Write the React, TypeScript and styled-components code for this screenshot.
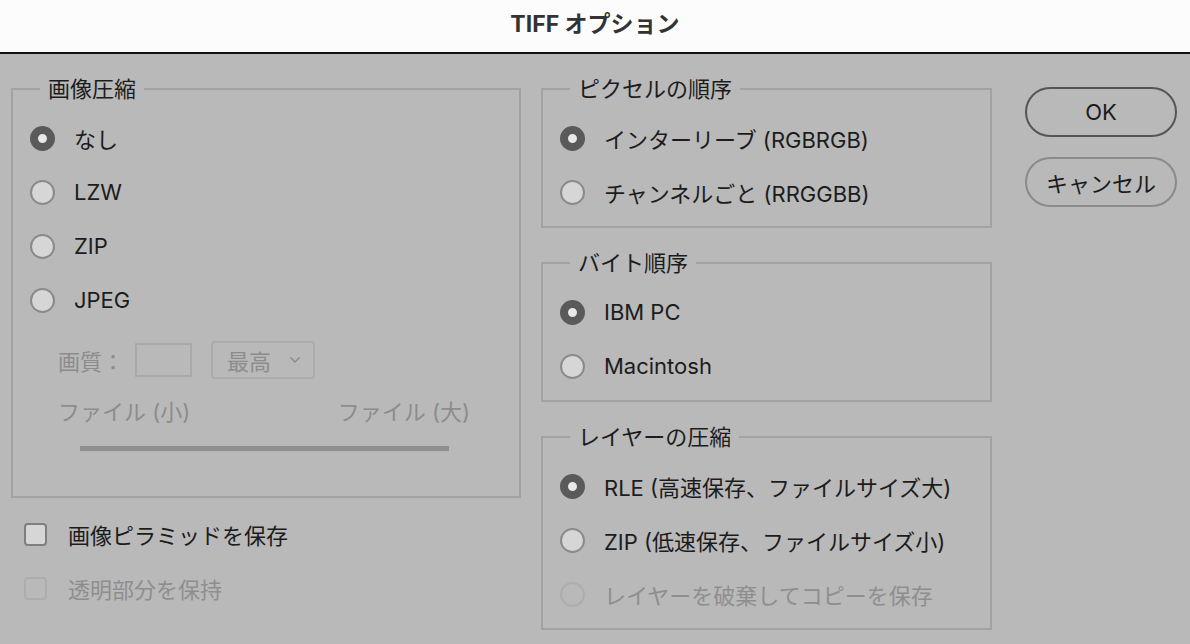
import styled, { createGlobalStyle } from "styled-components";

const GlobalStyle = createGlobalStyle`
  html, body {
    margin: 0;
    padding: 0;
    background: #b9b9b9;
  }
  body {
    font-family: Inter, "Noto Sans CJK JP", sans-serif;
    color: #1c1c1c;
  }
`;

const Dialog = styled.div`
  width: 1190px;
  height: 644px;
  display: flex;
  flex-direction: column;
  overflow: hidden;
`;

const TitleBar = styled.div`
  height: 54px;
  flex: none;
  background: #fcfcfc;
  border-bottom: 2px solid #111;
  display: flex;
  justify-content: center;
  align-items: center;
  padding-bottom: 9px;
  box-sizing: border-box;
  font-size: 23px;
  font-weight: bold;
  color: #333;
`;

const Body = styled.div`
  flex: 1;
  display: flex;
  gap: 20px;
  padding: 20px 14px 0 11px;
`;

const Column = styled.div<{ $width: number }>`
  width: ${(p) => p.$width}px;
  flex: none;
  display: flex;
  flex-direction: column;
  gap: 20px;
`;

const LeftColumn = styled(Column)`
  gap: 9px;
`;

const Group = styled.fieldset<{ $bottom?: number }>`
  margin: 0;
  min-width: 0;
  border: 2px solid #a2a2a2;
  padding: 7px 0 ${(p) => (p.$bottom ?? 6) + 1}px 17px;
`;

const Legend = styled.legend`
  margin-left: 10px;
  padding: 0 8px;
  font-size: 22px;
  line-height: 30px;
`;

const OptionRow = styled.label<{ $disabled?: boolean }>`
  height: 54px;
  display: flex;
  align-items: center;
  gap: 19px;
  font-size: 22px;
  color: ${(p) => (p.$disabled ? "#8e8e8e" : "#1c1c1c")};
`;

const Radio = styled.span<{ $state: "on" | "off" | "disabled" }>`
  width: 25px;
  height: 25px;
  flex: none;
  box-sizing: border-box;
  border-radius: 50%;
  ${(p) =>
    p.$state === "on"
      ? `background: #e8e8e8; border: 8px solid #5a5a5a;`
      : p.$state === "off"
      ? `background: #d6d6d6; border: 2px solid #8a8a8a;`
      : `background: transparent; border: 2px solid #adadad;`}
`;

const Checkbox = styled.span<{ $disabled?: boolean }>`
  width: 23px;
  height: 23px;
  flex: none;
  box-sizing: border-box;
  border-radius: 4px;
  background: ${(p) => (p.$disabled ? "transparent" : "#d6d6d6")};
  border: 2px solid ${(p) => (p.$disabled ? "#adadad" : "#7f7f7f")};
`;

const CheckRow = styled(OptionRow)`
  padding-left: 13px;
  gap: 21px;
`;

const QualityRow = styled.div`
  margin-top: 13px;
  height: 40px;
  padding-left: 28px;
  display: flex;
  align-items: center;
  font-size: 22px;
  color: #8c8c8c;
`;

const QualityLabel = styled.span`
  width: 77px;
`;

const NumberBox = styled.span`
  width: 57px;
  height: 34px;
  box-sizing: border-box;
  border: 2px solid #a9a9a9;
  margin-right: 19px;
`;

const SelectBox = styled.span`
  width: 104px;
  height: 38px;
  box-sizing: border-box;
  border: 2px solid #acacac;
  border-radius: 4px;
  display: flex;
  align-items: center;
  justify-content: space-between;
  padding: 0 12px 0 14px;
`;

const SizeLabels = styled.div`
  margin-top: 15px;
  width: 412px;
  margin-left: 28px;
  height: 30px;
  display: flex;
  align-items: center;
  justify-content: space-between;
  font-size: 22px;
  color: #8c8c8c;
`;

const SliderTrack = styled.div`
  margin: 21px 0 0 50px;
  width: 369px;
  height: 5px;
  background: #8f8f8f;
`;

const ButtonColumn = styled.div`
  margin-left: 13px;
  padding-top: 13px;
  display: flex;
  flex-direction: column;
  gap: 20px;
`;

const Button = styled.button<{ $primary?: boolean }>`
  width: 152px;
  height: 50px;
  border-radius: 25px;
  background: transparent;
  border: 2px solid ${(p) => (p.$primary ? "#555" : "#8a8a8a")};
  font-family: inherit;
  font-size: 22px;
  color: #1c1c1c;
  padding: 0;
`;

function Chevron() {
  return (
    <svg width="12" height="8" viewBox="0 0 12 8">
      <path d="M1.5 1.5 L6 6 L10.5 1.5" fill="none" stroke="#8c8c8c" strokeWidth="1.5" />
    </svg>
  );
}

type Opt = { label: string; state: "on" | "off" | "disabled" };

function Options({ items }: { items: Opt[] }) {
  return (
    <>
      {items.map((o) => (
        <OptionRow key={o.label} $disabled={o.state === "disabled"}>
          <Radio $state={o.state} />
          {o.label}
        </OptionRow>
      ))}
    </>
  );
}

export default function App() {
  return (
    <Dialog>
      <GlobalStyle />
      <TitleBar>TIFF オプション</TitleBar>
      <Body>
        <LeftColumn $width={510}>
          <Group $bottom={44}>
            <Legend>画像圧縮</Legend>
            <Options
              items={[
                { label: "なし", state: "on" },
                { label: "LZW", state: "off" },
                { label: "ZIP", state: "off" },
                { label: "JPEG", state: "off" },
              ]}
            />
            <QualityRow>
              <QualityLabel>画質：</QualityLabel>
              <NumberBox />
              <SelectBox>
                最高
                <Chevron />
              </SelectBox>
            </QualityRow>
            <SizeLabels>
              <span>ファイル (小)</span>
              <span>ファイル (大)</span>
            </SizeLabels>
            <SliderTrack />
          </Group>
          <div>
            <CheckRow>
              <Checkbox />
              画像ピラミッドを保存
            </CheckRow>
            <CheckRow $disabled>
              <Checkbox $disabled />
              透明部分を保持
            </CheckRow>
          </div>
        </LeftColumn>
        <Column $width={451}>
          <Group>
            <Legend>ピクセルの順序</Legend>
            <Options
              items={[
                { label: "インターリーブ (RGBRGB)", state: "on" },
                { label: "チャンネルごと (RRGGBB)", state: "off" },
              ]}
            />
          </Group>
          <Group>
            <Legend>バイト順序</Legend>
            <Options
              items={[
                { label: "IBM PC", state: "on" },
                { label: "Macintosh", state: "off" },
              ]}
            />
          </Group>
          <Group>
            <Legend>レイヤーの圧縮</Legend>
            <Options
              items={[
                { label: "RLE (高速保存、ファイルサイズ大)", state: "on" },
                { label: "ZIP (低速保存、ファイルサイズ小)", state: "off" },
                { label: "レイヤーを破棄してコピーを保存", state: "disabled" },
              ]}
            />
          </Group>
        </Column>
        <ButtonColumn>
          <Button $primary>OK</Button>
          <Button>キャンセル</Button>
        </ButtonColumn>
      </Body>
    </Dialog>
  );
}
